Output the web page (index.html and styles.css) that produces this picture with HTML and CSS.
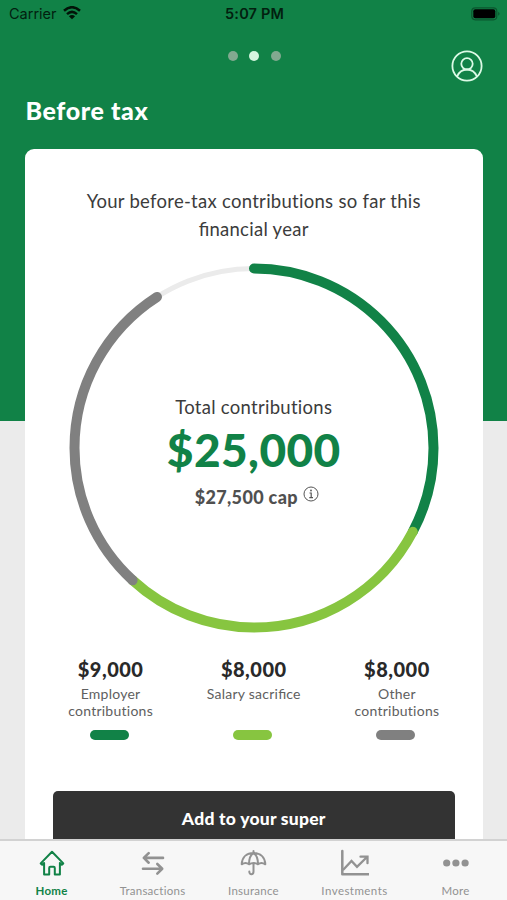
FILE: index.html
```html
<!DOCTYPE html>
<html lang="en">
<head>
<meta charset="utf-8">
<meta name="viewport" content="width=device-width, initial-scale=1">
<title>Before tax</title>
<link rel="stylesheet" href="styles.css">
</head>
<body>
<div class="app">
  <header class="status">
    <div class="carrier"><span>Carrier</span>
      <svg width="18" height="14" viewBox="0 0 18 14" fill="none" stroke="#021308" stroke-width="2.5"><path d="M1 4.8Q9-2.4 17 4.8"/><path d="M4 8.1Q9 3.7 14 8.1"/><path d="M9 13.3 5.9 10.2Q9 7.6 12.1 10.2Z" fill="#021308" stroke="none"/></svg>
    </div>
    <time class="clock">5:07 PM</time>
    <svg class="battery" width="30" height="14" viewBox="0 0 30 14"><rect x=".8" y=".8" width="25" height="12" rx="3.5" fill="none" stroke="#0b572f" stroke-width="1.2"/><rect x="2.3" y="2.3" width="22" height="9" rx="2" fill="#000"/><path d="M27.2 4.8Q30 6.8 27.2 8.8Z" fill="#0b572f"/></svg>
  </header>
  <div class="topbar">
    <div class="dots"><i></i><i class="on"></i><i></i></div>
    <svg class="profile" width="32" height="32" viewBox="0 0 32 32" fill="none" stroke="#dcfae6" stroke-width="1.8"><circle cx="16" cy="16" r="14.6"/><circle cx="16" cy="13.8" r="5.7"/><path d="M6.1 26.5C8.1 21.8 12 19.5 16 19.5S23.9 21.8 25.9 26.5"/></svg>
  </div>
  <h1>Before tax</h1>
  <main class="card">
    <p class="intro">Your before-tax contributions so far this<br><span class="fi">fi</span>nancial year</p>
    <section class="chart">
      <svg class="ring" width="370" height="370" viewBox="0 0 370 370" fill="none">
        <g transform="rotate(-90 185 185)" stroke-width="10" stroke-linecap="round">
          <circle cx="185" cy="185" r="179.5" stroke="#ebebeb" stroke-width="5"/>
          <circle cx="185" cy="185" r="179.5" pathLength="27500" stroke="#118247" stroke-dasharray="9000 18500"/>
          <circle cx="185" cy="185" r="179.5" pathLength="27500" stroke="#87c540" stroke-dasharray="8000 19500" stroke-dashoffset="-9000"/>
          <circle cx="185" cy="185" r="179.5" pathLength="27500" stroke="#808080" stroke-dasharray="8000 19500" stroke-dashoffset="-17000"/>
        </g>
      </svg>
      <div class="totals">
        <p class="label">Total contributions</p>
        <p class="amount">$25,000</p>
        <p class="cap"><span>$27,500 cap</span>
          <svg width="16" height="16" viewBox="0 0 16 16" fill="none" stroke="#555"><circle cx="8" cy="8" r="7"/><path d="M6.5 7H8.2V11.5M6.3 11.6H10" stroke-width="1.2"/><circle cx="8" cy="4.5" r=".9" fill="#555" stroke="none"/></svg>
        </p>
      </div>
    </section>
    <section class="legend">
      <div class="item"><strong>$9,000</strong><p>Employer<br>contributions</p><i class="employer"></i></div>
      <div class="item"><strong>$8,000</strong><p>Salary sacri<span class="fi">fi</span>ce</p><i class="salary"></i></div>
      <div class="item"><strong>$8,000</strong><p>Other<br>contributions</p><i class="other"></i></div>
    </section>
    <button class="add">Add to your super</button>
  </main>
  <nav class="tabs">
    <a class="tab active"><svg viewBox="0 0 28 28"><path d="M2.7 14.4 14 2.7 25.3 14.4 23.8 15.8 21.9 14V25.5H16.8V19Q16.8 17.8 15.6 17.8H12.4Q11.2 17.8 11.2 19V25.5H6.1V14L4.2 15.8Z" stroke-width="2"/></svg><span>Home</span></a>
    <a class="tab"><svg viewBox="0 0 28 28"><path d="M24 8.9H5M9.7 4.1 4.8 8.9 9.7 13.7M4 19.8H23M18.3 15 23.2 19.8 18.3 24.6" stroke-width="2.6"/></svg><span>Transactions</span></a>
    <a class="tab"><svg viewBox="0 0 28 28"><path d="M13.5 2V4M1.7 15.3C2 8 6.8 3.9 13.5 3.9S25 8 25.3 15.3Q21.3 12.6 18 15.3 13.5 12.6 9 15.3 5.7 12.6 1.7 15.3ZM9 15.3C9 9.8 10.8 5.8 13.5 4.2 16.2 5.8 18 9.8 18 15.3M13.5 14V22.5C13.5 26.2 9.3 26.2 9.3 22.6" stroke-width="2"/></svg><span>Insurance</span></a>
    <a class="tab wide"><svg viewBox="0 0 28 28"><path d="M1.3 2V25.2H28" stroke-width="2.5"/><path d="M2.5 20.5 10.5 12 16 17.8 26 8M19.5 7.7H26.5V14.2" stroke-width="2.3" stroke-linejoin="miter"/></svg><span>Investments</span></a>
    <a class="tab"><svg viewBox="0 0 28 28"><g fill="#929292" stroke="none"><circle cx="4.7" cy="14" r="3.6"/><circle cx="13.9" cy="14" r="3.6"/><circle cx="23.1" cy="14" r="3.6"/></g></svg><span>More</span></a>
  </nav>
</div>
</body>
</html>
```
FILE: styles.css
```css
* { box-sizing: border-box; }
body, p, h1 { margin: 0; }
body { font-family: Lato, sans-serif; overflow: hidden; }
.fi { letter-spacing: 0; }
.app { width: 507px; height: 900px; overflow: hidden; display: flex; flex-direction: column; background: linear-gradient(#118247 421px, #ebebeb 421px); }
.status { height: 28px; flex: none; display: grid; grid-template-columns: 1fr auto 1fr; align-items: center; padding: 0 7px 0 9px; font: 14.5px/28px Inter, sans-serif; color: #02200f; }
.carrier { display: flex; align-items: center; gap: 6px; }
.carrier svg { margin-top: -2px; }
.clock { font-weight: 600; letter-spacing: .15px; }
.battery { justify-self: end; margin-right: -1px; margin-top: -1px; }
.topbar { height: 64px; flex: none; display: grid; grid-template-columns: 1fr auto 1fr; padding: 22px 24px 0 25px; }
.dots { grid-column: 2; display: flex; gap: 11.5px; padding-top: 1px; }
.dots i { width: 10px; height: 10px; border-radius: 50%; background: #82a990; }
.dots .on { background: #d5f5df; }
.profile { justify-self: end; }
h1 { height: 57px; flex: none; padding-left: 25.5px; color: #fff; font-size: 25px; line-height: 36px; font-weight: 900; letter-spacing: .6px; }
.card { flex: 1; min-height: 0; overflow: hidden; margin: 0 24.5px 0 25px; padding: 38px 28px 0; border-radius: 9px 9px 0 0; background: #fff; }
.intro { height: 76px; text-align: center; color: #3c3c3c; font-size: 18.5px; line-height: 28px; letter-spacing: .28px; white-space: nowrap; }
.chart { display: grid; justify-items: center; align-items: center; height: 370px; }
.ring, .totals { grid-area: 1 / 1; }
.totals { display: flex; flex-direction: column; align-items: center; padding-top: 11px; }
.label { color: #3c3c3c; font-size: 18.5px; line-height: 28px; letter-spacing: .28px; }
.amount { color: #118247; font-size: 46px; line-height: 58px; font-weight: 900; letter-spacing: .4px; }
.cap { display: flex; align-items: center; gap: 5px; color: #505050; font-size: 18px; line-height: 36px; font-weight: 900; letter-spacing: .35px; padding-left: 6px; }
.cap svg { margin-top: -5px; }
.legend { display: grid; grid-template-columns: repeat(3, 1fr); column-gap: 29px; height: 158px; padding-top: 22px; margin: 0 1px 0 0; }
.item { display: flex; flex-direction: column; align-items: center; text-align: center; height: 85px; white-space: nowrap; }
.item strong { color: #292929; font-size: 20px; line-height: 29px; font-weight: 900; letter-spacing: .5px; padding-left: 1px; }
.item p { color: #606060; font-size: 14px; line-height: 17px; letter-spacing: .25px; padding: 1px 0 0 1px; }
.item i { width: 39px; height: 10px; border-radius: 5px; margin: auto 1px 0 0; }
.employer { background: #118247; }
.salary { background: #87c540; }
.other { background: #808080; }
.add { display: block; width: 100%; height: 56px; border: 0; border-radius: 5px; background: #333; color: #fff; font: 900 17.5px/56px Lato, sans-serif; letter-spacing: .25px; padding: 0; }
.tabs { height: 61px; flex: none; display: grid; grid-template-columns: repeat(5, 101px); justify-content: center; border-top: 2px solid #d2d2d2; background: #f7f7f7; }
.tab { display: flex; flex-direction: column; align-items: center; color: #929292; font-size: 11.5px; padding-top: 8px; line-height: 14px; letter-spacing: .25px; }
.tab svg { width: 28px; height: 28px; fill: none; stroke: currentColor; stroke-linecap: round; stroke-linejoin: round; margin-bottom: 7px; }
.wide { letter-spacing: .45px; }
.active { color: #118247; font-weight: 700; }
```
